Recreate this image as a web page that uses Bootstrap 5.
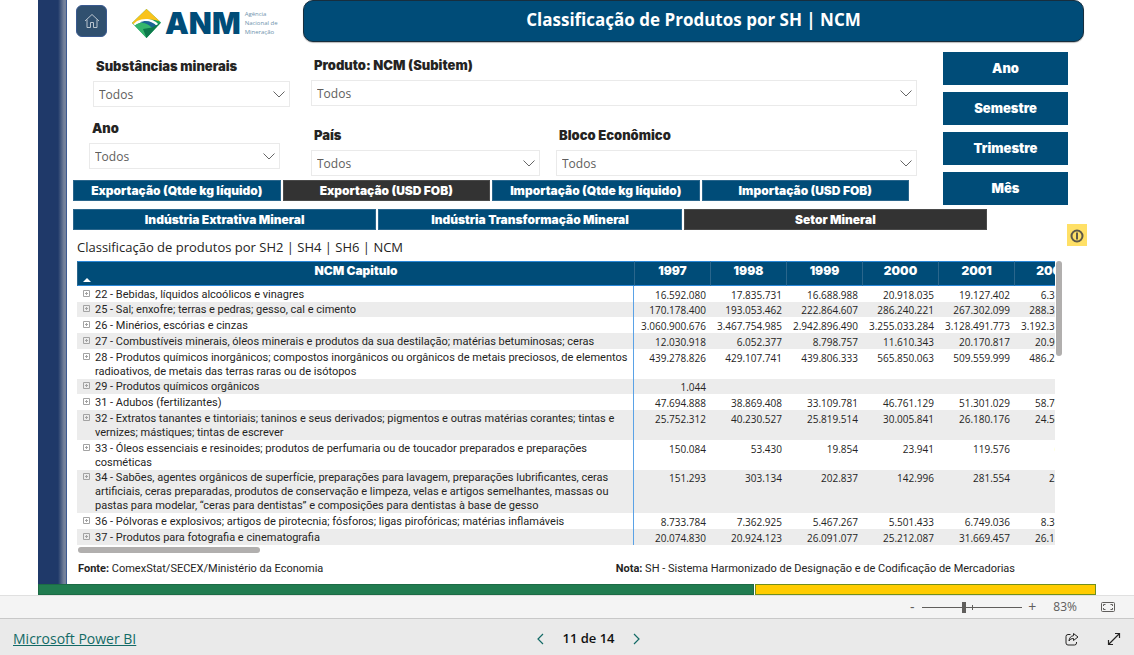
<!DOCTYPE html>
<html lang="pt-BR">
<head>
<meta charset="utf-8">
<meta name="viewport" content="width=device-width, initial-scale=1">
<title>Classificação de Produtos por SH | NCM</title>
<link href="https://cdn.jsdelivr.net/npm/bootstrap@5.3.0/dist/css/bootstrap.min.css" rel="stylesheet">
<style>
:root { --anm: #004c78; --ink: #252423; --ui: "Open Sans", "Noto Sans", sans-serif; --black: Inter, "Open Sans", sans-serif; --small: Roboto, "Open Sans", sans-serif; }
body { font-family: var(--ui); color: var(--ink); font-size: 12px; }
button { font-family: inherit; }
.report { margin: 0 38px; }
.side-strip { width: 29px; background: linear-gradient(90deg, #1f3969 0 20px, #75829b 26px 28px, #3c5a92 28px); }
.home-btn { width: 31px; height: 32px; background: #30506f; border: 1px solid #3a5a90; border-radius: 6px; margin: 5px 25px 0 9px; }
.logo { width: 171px; margin-top: 8px; }
.logo-name { font: 900 30px/30px Inter, sans-serif; color: var(--anm); }
.logo-sub { font-size: 6px; line-height: 9px; color: #6f93ad; }
.page-title { height: 42px; background: var(--anm); border: 1px solid #172e3e; border-radius: 10px; box-shadow: 0 1px 1px #bbb; color: #fff; font-size: 17px; font-weight: 700; line-height: 38px; margin-right: 12px; }
.inset { padding-left: 6px; }
.filters-left { width: 238px; padding-top: 14px; }
.filters-right { padding-top: 13px; }
.field-name { display: block; font: 900 13px/20px var(--black); margin: 0 0 5px 3px; }
.slicer { display: block; width: 100%; height: 26px; padding: 1px 24px 0 5px; border: 1px solid #eaeaea; border-radius: 0; color: #605e5c; font-size: 12px; appearance: none; background: #fff url("data:image/svg+xml,%3Csvg xmlns='http://www.w3.org/2000/svg' width='12' height='7'%3E%3Cpath d='M.5.5 6 6 11.5.5' fill='none' stroke='%23666'/%3E%3C/svg%3E") no-repeat right 4px center; }
.field-a { margin: 0 21px 11px 20px; }
.field-b { margin: 0 31px 0 16px; }
.field-c { margin-bottom: 19px; }
.field-d { flex: 229 1 0; }
.field-e { flex: 361 1 0; }
.tab-btn { flex: 1 1 0; height: 21px; padding: 0; border: 1px solid #2a668c; border-radius: 0; background: var(--anm); color: #fff; font: 900 12px/19px var(--black); white-space: nowrap; }
.tab-btn.chosen { background: #333; border-color: #4a4a4a; }
.tab-row { gap: 2px; }
.periods { width: 125px; margin: 10px 28px 0 26px; gap: 7px; }
.period-btn { height: 33px; border: 0; border-radius: 0; padding: 0; background: var(--anm); color: #fff; font: 900 13px/33px var(--black); }
.matrix-title { font-size: 13px; line-height: 20px; margin: 7px 0 4px 4px; font-weight: 400; }
.info-btn { width: 20px; height: 22px; background: #ffe066; border: 0; padding: 0; margin-right: 9px; }
.matrix-wrap { margin: 0 34px 0 10px; gap: 1px; }
.matrix { width: 1013px; table-layout: fixed; border-collapse: separate; border-spacing: 0; font: 10px/14px var(--ui); }
.matrix thead th { height: 25px; padding: 1px 0 0; vertical-align: top; background: var(--anm); color: #fff; border-top: 1px solid #2b88d8; border-bottom: 1px solid #2b88d8; border-left: 1px solid #2a668c; text-align: center; font: 900 12px/16px var(--black); }
.col-name { width: 557px; }
.sort-mark { left: 5px; bottom: 3px; }
.matrix tbody th { font: 400 11px/14px var(--small); border-right: 1px solid #5aa2e6; padding: 2px 0 0 6px; white-space: nowrap; }
.matrix td { padding: 2px 4px 0 0; text-align: right; vertical-align: top; }
.matrix tbody tr:nth-child(even) > * { background: #ececec; }
.matrix tbody tr:nth-child(4n+2) > * { padding-top: 1px; }
.expander { width: 7px; height: 7px; padding: 0; border: 0; background: none; line-height: 0; margin: 2px 5px 0 0; }
.expander svg { display: block; }
.thumb-v { width: 6px; height: 95px; border-radius: 3px; background: #b1afae; }
.thumb-h { width: 182px; height: 6px; border-radius: 3px; background: #b1afae; margin: 2px 0 0 11px; }
.notes { font: 11px/20px var(--small); margin: 6px 81px 5px 11px; }
.notes b { font-weight: 700; }
.stripe { height: 11px; gap: 1px; }
.stripe-green { flex: 717 1 0; background: #217c50; border: 1px solid #1c6b45; }
.stripe-yellow { flex: 341 1 0; background: #fc0; border: 1px solid #708f1e; }
.zoom-bar { height: 24px; background: #f4f4f4; border-top: 1px solid #e0e0e0; border-bottom: 1px solid #c8c8c8; padding-right: 19px; color: #605e5c; }
.zoom-btn { width: 10px; padding: 0; border: 0; background: none; color: #605e5c; font-size: 14px; line-height: 20px; }
.zoom-range { width: 100px; height: 12px; margin: 0 5px; appearance: none; background: linear-gradient(#605e5c, #605e5c) 50px center / 1px 5px no-repeat, linear-gradient(#605e5c, #605e5c) center / 100% 1px no-repeat; }
.zoom-range::-webkit-slider-thumb { appearance: none; width: 4px; height: 11px; background: #605e5c; }
.status-bar { min-height: 36px; background: #eaeaea; padding: 3px 13px 0; }
.status-bar a { color: #136a66; font-size: 14px; }
.pager { padding-left: 43px; font-size: 13px; font-weight: 600; color: #111; gap: 18px; }
.icon-btn { border: 0; padding: 0; background: none; color: #252423; line-height: 0; }
</style>
</head>
<body class="min-vh-100 d-flex flex-column bg-white">
<svg width="0" height="0" class="d-none"><symbol id="plus" viewBox="0 0 7 7"><path d="M.5.5h6v6h-6zM2 3.5h3M3.5 2v3" fill="none" stroke="#a3a3a3"/></symbol></svg>

<main class="report flex-fill d-flex flex-column">
  <div class="d-flex flex-fill">
    <div class="side-strip flex-shrink-0"></div>
    <div class="flex-fill overflow-hidden">

      <header class="d-flex align-items-start">
        <button class="home-btn p-0 flex-shrink-0 d-flex align-items-center justify-content-center" aria-label="Início">
          <svg width="16" height="16" viewBox="0 0 16 16" fill="none" stroke="#b9c4cf"><path d="M1 8 8 1.500 15 8M3 6.500V14.500H6.500V9.500H9.500V14.500H13V6.500"/></svg>
        </button>
        <div class="logo d-flex align-items-center flex-shrink-0">
          <svg class="flex-shrink-0 me-1" width="29" height="29" viewBox="0 0 29 29">
            <path d="M14.500 0 29 13.500 14.500 29 0 14z" fill="#16a05c"/>
            <path d="M14.500 0 28 12.500C20 9 8 10 2 15.500L0 14z" fill="#f9c31c"/>
            <path d="M5 12C12 8.500 22 9.500 26.500 15.500L25 18C20 11.500 10 11 3 16.500L1.500 15z" fill="#fff"/>
            <path d="M8 13.500C13 10.500 21 12 25 17.500l-4 3C17 15.500 13 13.500 8 13.500z" fill="#1b6595"/>
            <path d="M3 16.500C8 12.500 15 13.500 20 19L14.500 29z" fill="#35b56d"/>
            <path d="M20 18.500 29 13.500 14.500 29 11 20z" fill="#0d7a4c"/>
          </svg>
          <span class="logo-name">ANM</span>
          <span class="logo-sub ms-1">Agência<br>Nacional de<br>Mineração</span>
        </div>
        <h1 class="page-title flex-fill text-center mb-0">Classificação de Produtos por SH | NCM</h1>
      </header>

      <div class="d-flex align-items-start">
        <div class="inset flex-fill">
          <div class="d-flex pb-1">
            <div class="filters-left flex-shrink-0">
              <div class="field-a"><label class="field-name" for="f-sub">Substâncias minerais</label><select class="slicer" id="f-sub"><option>Todos</option></select></div>
              <div class="field-b"><label class="field-name" for="f-ano">Ano</label><select class="slicer" id="f-ano"><option>Todos</option></select></div>
            </div>
            <div class="filters-right flex-fill">
              <div class="field-c"><label class="field-name" for="f-ncm">Produto: NCM (Subitem)</label><select class="slicer" id="f-ncm"><option>Todos</option></select></div>
              <div class="d-flex gap-3">
                <div class="field-d"><label class="field-name" for="f-pais">País</label><select class="slicer" id="f-pais"><option>Todos</option></select></div>
                <div class="field-e"><label class="field-name" for="f-bloco">Bloco Econômico</label><select class="slicer" id="f-bloco"><option>Todos</option></select></div>
              </div>
            </div>
          </div>
          <div class="tab-row d-flex pe-2">
            <button class="tab-btn">Exportação (Qtde kg líquido)</button>
            <button class="tab-btn chosen">Exportação (USD FOB)</button>
            <button class="tab-btn">Importação (Qtde kg líquido)</button>
            <button class="tab-btn">Importação (USD FOB)</button>
          </div>
        </div>
        <div class="periods d-flex flex-column flex-shrink-0">
          <button class="period-btn">Ano</button>
          <button class="period-btn">Semestre</button>
          <button class="period-btn">Trimestre</button>
          <button class="period-btn">Mês</button>
        </div>
      </div>

      <div class="inset d-flex align-items-center pt-1">
        <div class="flex-fill pe-5 me-4">
          <div class="tab-row d-flex pe-2">
            <button class="tab-btn">Indústria Extrativa Mineral</button>
            <button class="tab-btn">Indústria Transformação Mineral</button>
            <button class="tab-btn chosen">Setor Mineral</button>
          </div>
          <h2 class="matrix-title">Classificação de produtos por SH2 | SH4 | SH6 | NCM</h2>
        </div>
        <button class="info-btn flex-shrink-0" aria-label="Informação">
          <svg width="14" height="14" viewBox="0 0 14 14" fill="none" stroke="#5f5a48" stroke-width="2"><circle cx="7" cy="7" r="5.500"/><path d="M7 3.500v7"/></svg>
        </button>
      </div>

      <div class="matrix-wrap d-flex align-items-start">
        <div class="flex-fill overflow-hidden" style="width:0">
          <table class="matrix">
            <thead><tr>
              <th class="col-name position-relative" scope="col">NCM Capitulo<svg class="sort-mark position-absolute" width="8" height="4"><path d="M0 4 4 0 8 4z" fill="#fff"/></svg></th>
              <th scope="col">1997</th><th scope="col">1998</th><th scope="col">1999</th><th scope="col">2000</th><th scope="col">2001</th><th scope="col">2002</th>
            </tr></thead>
            <tbody>
              <tr><th scope="row"><div class="d-flex align-items-start"><button class="expander" aria-label="Expandir"><svg width="7" height="7"><use href="#plus"/></svg></button><span>22 - Bebidas, líquidos alcoólicos e vinagres</span></div></th><td>16.592.080</td><td>17.835.731</td><td>16.688.988</td><td>20.918.035</td><td>19.127.402</td><td>6.332.410</td></tr>
              <tr><th scope="row"><div class="d-flex align-items-start"><button class="expander" aria-label="Expandir"><svg width="7" height="7"><use href="#plus"/></svg></button><span>25 - Sal; enxofre; terras e pedras; gesso, cal e cimento</span></div></th><td>170.178.400</td><td>193.053.462</td><td>222.864.607</td><td>286.240.221</td><td>267.302.099</td><td>288.330.154</td></tr>
              <tr><th scope="row"><div class="d-flex align-items-start"><button class="expander" aria-label="Expandir"><svg width="7" height="7"><use href="#plus"/></svg></button><span>26 - Minérios, escórias e cinzas</span></div></th><td>3.060.900.676</td><td>3.467.754.985</td><td>2.942.896.490</td><td>3.255.033.284</td><td>3.128.491.773</td><td>3.192.310.562</td></tr>
              <tr><th scope="row"><div class="d-flex align-items-start"><button class="expander" aria-label="Expandir"><svg width="7" height="7"><use href="#plus"/></svg></button><span>27 - Combustíveis minerais, óleos minerais e produtos da sua destilação; matérias betuminosas; ceras</span></div></th><td>12.030.918</td><td>6.052.377</td><td>8.798.757</td><td>11.610.343</td><td>20.170.817</td><td>20.986.304</td></tr>
              <tr><th scope="row"><div class="d-flex align-items-start"><button class="expander" aria-label="Expandir"><svg width="7" height="7"><use href="#plus"/></svg></button><span>28 - Produtos químicos inorgânicos; compostos inorgânicos ou orgânicos de metais preciosos, de elementos<br>radioativos, de metais das terras raras ou de isótopos</span></div></th><td>439.278.826</td><td>429.107.741</td><td>439.806.333</td><td>565.850.063</td><td>509.559.999</td><td>486.221.730</td></tr>
              <tr><th scope="row"><div class="d-flex align-items-start"><button class="expander" aria-label="Expandir"><svg width="7" height="7"><use href="#plus"/></svg></button><span>29 - Produtos químicos orgânicos</span></div></th><td>1.044</td><td></td><td></td><td></td><td></td><td></td></tr>
              <tr><th scope="row"><div class="d-flex align-items-start"><button class="expander" aria-label="Expandir"><svg width="7" height="7"><use href="#plus"/></svg></button><span>31 - Adubos (fertilizantes)</span></div></th><td>47.694.888</td><td>38.869.408</td><td>33.109.781</td><td>46.761.129</td><td>51.301.029</td><td>58.700.418</td></tr>
              <tr><th scope="row"><div class="d-flex align-items-start"><button class="expander" aria-label="Expandir"><svg width="7" height="7"><use href="#plus"/></svg></button><span>32 - Extratos tanantes e tintoriais; taninos e seus derivados; pigmentos e outras matérias corantes; tintas e<br>vernizes; mástiques; tintas de escrever</span></div></th><td>25.752.312</td><td>40.230.527</td><td>25.819.514</td><td>30.005.841</td><td>26.180.176</td><td>24.562.093</td></tr>
              <tr><th scope="row"><div class="d-flex align-items-start"><button class="expander" aria-label="Expandir"><svg width="7" height="7"><use href="#plus"/></svg></button><span>33 - Óleos essenciais e resinoides; produtos de perfumaria ou de toucador preparados e preparações<br>cosméticas</span></div></th><td>150.084</td><td>53.430</td><td>19.854</td><td>23.941</td><td>119.576</td><td>60.218</td></tr>
              <tr><th scope="row"><div class="d-flex align-items-start"><button class="expander" aria-label="Expandir"><svg width="7" height="7"><use href="#plus"/></svg></button><span>34 - Sabões, agentes orgânicos de superfície, preparações para lavagem, preparações lubrificantes, ceras<br>artificiais, ceras preparadas, produtos de conservação e limpeza, velas e artigos semelhantes, massas ou<br>pastas para modelar, “ceras para dentistas” e composições para dentistas à base de gesso</span></div></th><td>151.293</td><td>303.134</td><td>202.837</td><td>142.996</td><td>281.554</td><td>271.960</td></tr>
              <tr><th scope="row"><div class="d-flex align-items-start"><button class="expander" aria-label="Expandir"><svg width="7" height="7"><use href="#plus"/></svg></button><span>36 - Pólvoras e explosivos; artigos de pirotecnia; fósforos; ligas pirofóricas; matérias inflamáveis</span></div></th><td>8.733.784</td><td>7.362.925</td><td>5.467.267</td><td>5.501.433</td><td>6.749.036</td><td>8.380.127</td></tr>
              <tr><th scope="row"><div class="d-flex align-items-start"><button class="expander" aria-label="Expandir"><svg width="7" height="7"><use href="#plus"/></svg></button><span>37 - Produtos para fotografia e cinematografia</span></div></th><td>20.074.830</td><td>20.924.123</td><td>26.091.077</td><td>25.212.087</td><td>31.669.457</td><td>26.130.845</td></tr>
            </tbody>
          </table>
        </div>
        <div class="thumb-v flex-shrink-0"></div>
      </div>
      <div class="thumb-h"></div>

      <div class="notes d-flex justify-content-between">
        <span><b>Fonte:</b> ComexStat/SECEX/Ministério da Economia</span>
        <span><b>Nota:</b> SH - Sistema Harmonizado de Designação e de Codificação de Mercadorias</span>
      </div>
    </div>
  </div>
  <div class="stripe d-flex"><div class="stripe-green"></div><div class="stripe-yellow"></div></div>
</main>

<div class="zoom-bar d-flex align-items-center justify-content-end">
  <button class="zoom-btn" aria-label="Reduzir">-</button>
  <input class="zoom-range" type="range" min="0" max="100" value="41" aria-label="Zoom">
  <button class="zoom-btn" aria-label="Ampliar">+</button>
  <span class="ms-3 me-4">83%</span>
  <button class="icon-btn" aria-label="Ajustar à página"><svg width="14" height="10" viewBox="0 0 14 10" fill="none" stroke="#605e5c"><rect x=".5" y=".5" width="13" height="9" rx="1"/><path d="M4.500 2.500h-2v1.500M9.500 2.500h2v1.500M4.500 7.500h-2V6M9.500 7.500h2V6"/></svg></button>
</div>

<footer class="status-bar d-flex align-items-center">
  <div class="col"><a href="#">Microsoft Power BI</a></div>
  <div class="pager d-flex align-items-center">
    <button class="icon-btn" aria-label="Página anterior"><svg width="7" height="12" viewBox="0 0 7 12" fill="none" stroke="#136a66" stroke-width="1.200"><path d="M6 1 1 6l5 5"/></svg></button>
    <span>11 de 14</span>
    <button class="icon-btn" aria-label="Próxima página"><svg width="7" height="12" viewBox="0 0 7 12" fill="none" stroke="#136a66" stroke-width="1.200"><path d="m1 1 5 5-5 5"/></svg></button>
  </div>
  <div class="col d-flex justify-content-end gap-4">
    <button class="icon-btn me-1" aria-label="Compartilhar"><svg width="14" height="14" viewBox="0 0 14 14" fill="none" stroke="currentColor" stroke-linejoin="round"><path d="M5.500 2.500H3a2 2 0 0 0-2 2V11a2 2 0 0 0 2 2h6.500a2 2 0 0 0 2-2v-1"/><path d="M8.500 1.500 13 5 8.500 8.500v-2C6.500 6.500 5 7.200 4 9c.2-3 1.800-5 4.500-5.300z"/></svg></button>
    <button class="icon-btn" aria-label="Tela inteira"><svg width="14" height="14" viewBox="0 0 14 14" fill="none" stroke="currentColor" stroke-width="1.200"><path d="M1.500 12.500l11-11M8 1.500h4.500V6M1.500 8v4.500H6"/></svg></button>
  </div>
</footer>
<script src="https://cdn.jsdelivr.net/npm/bootstrap@5.3.0/dist/js/bootstrap.bundle.min.js"></script>
</body>
</html>
